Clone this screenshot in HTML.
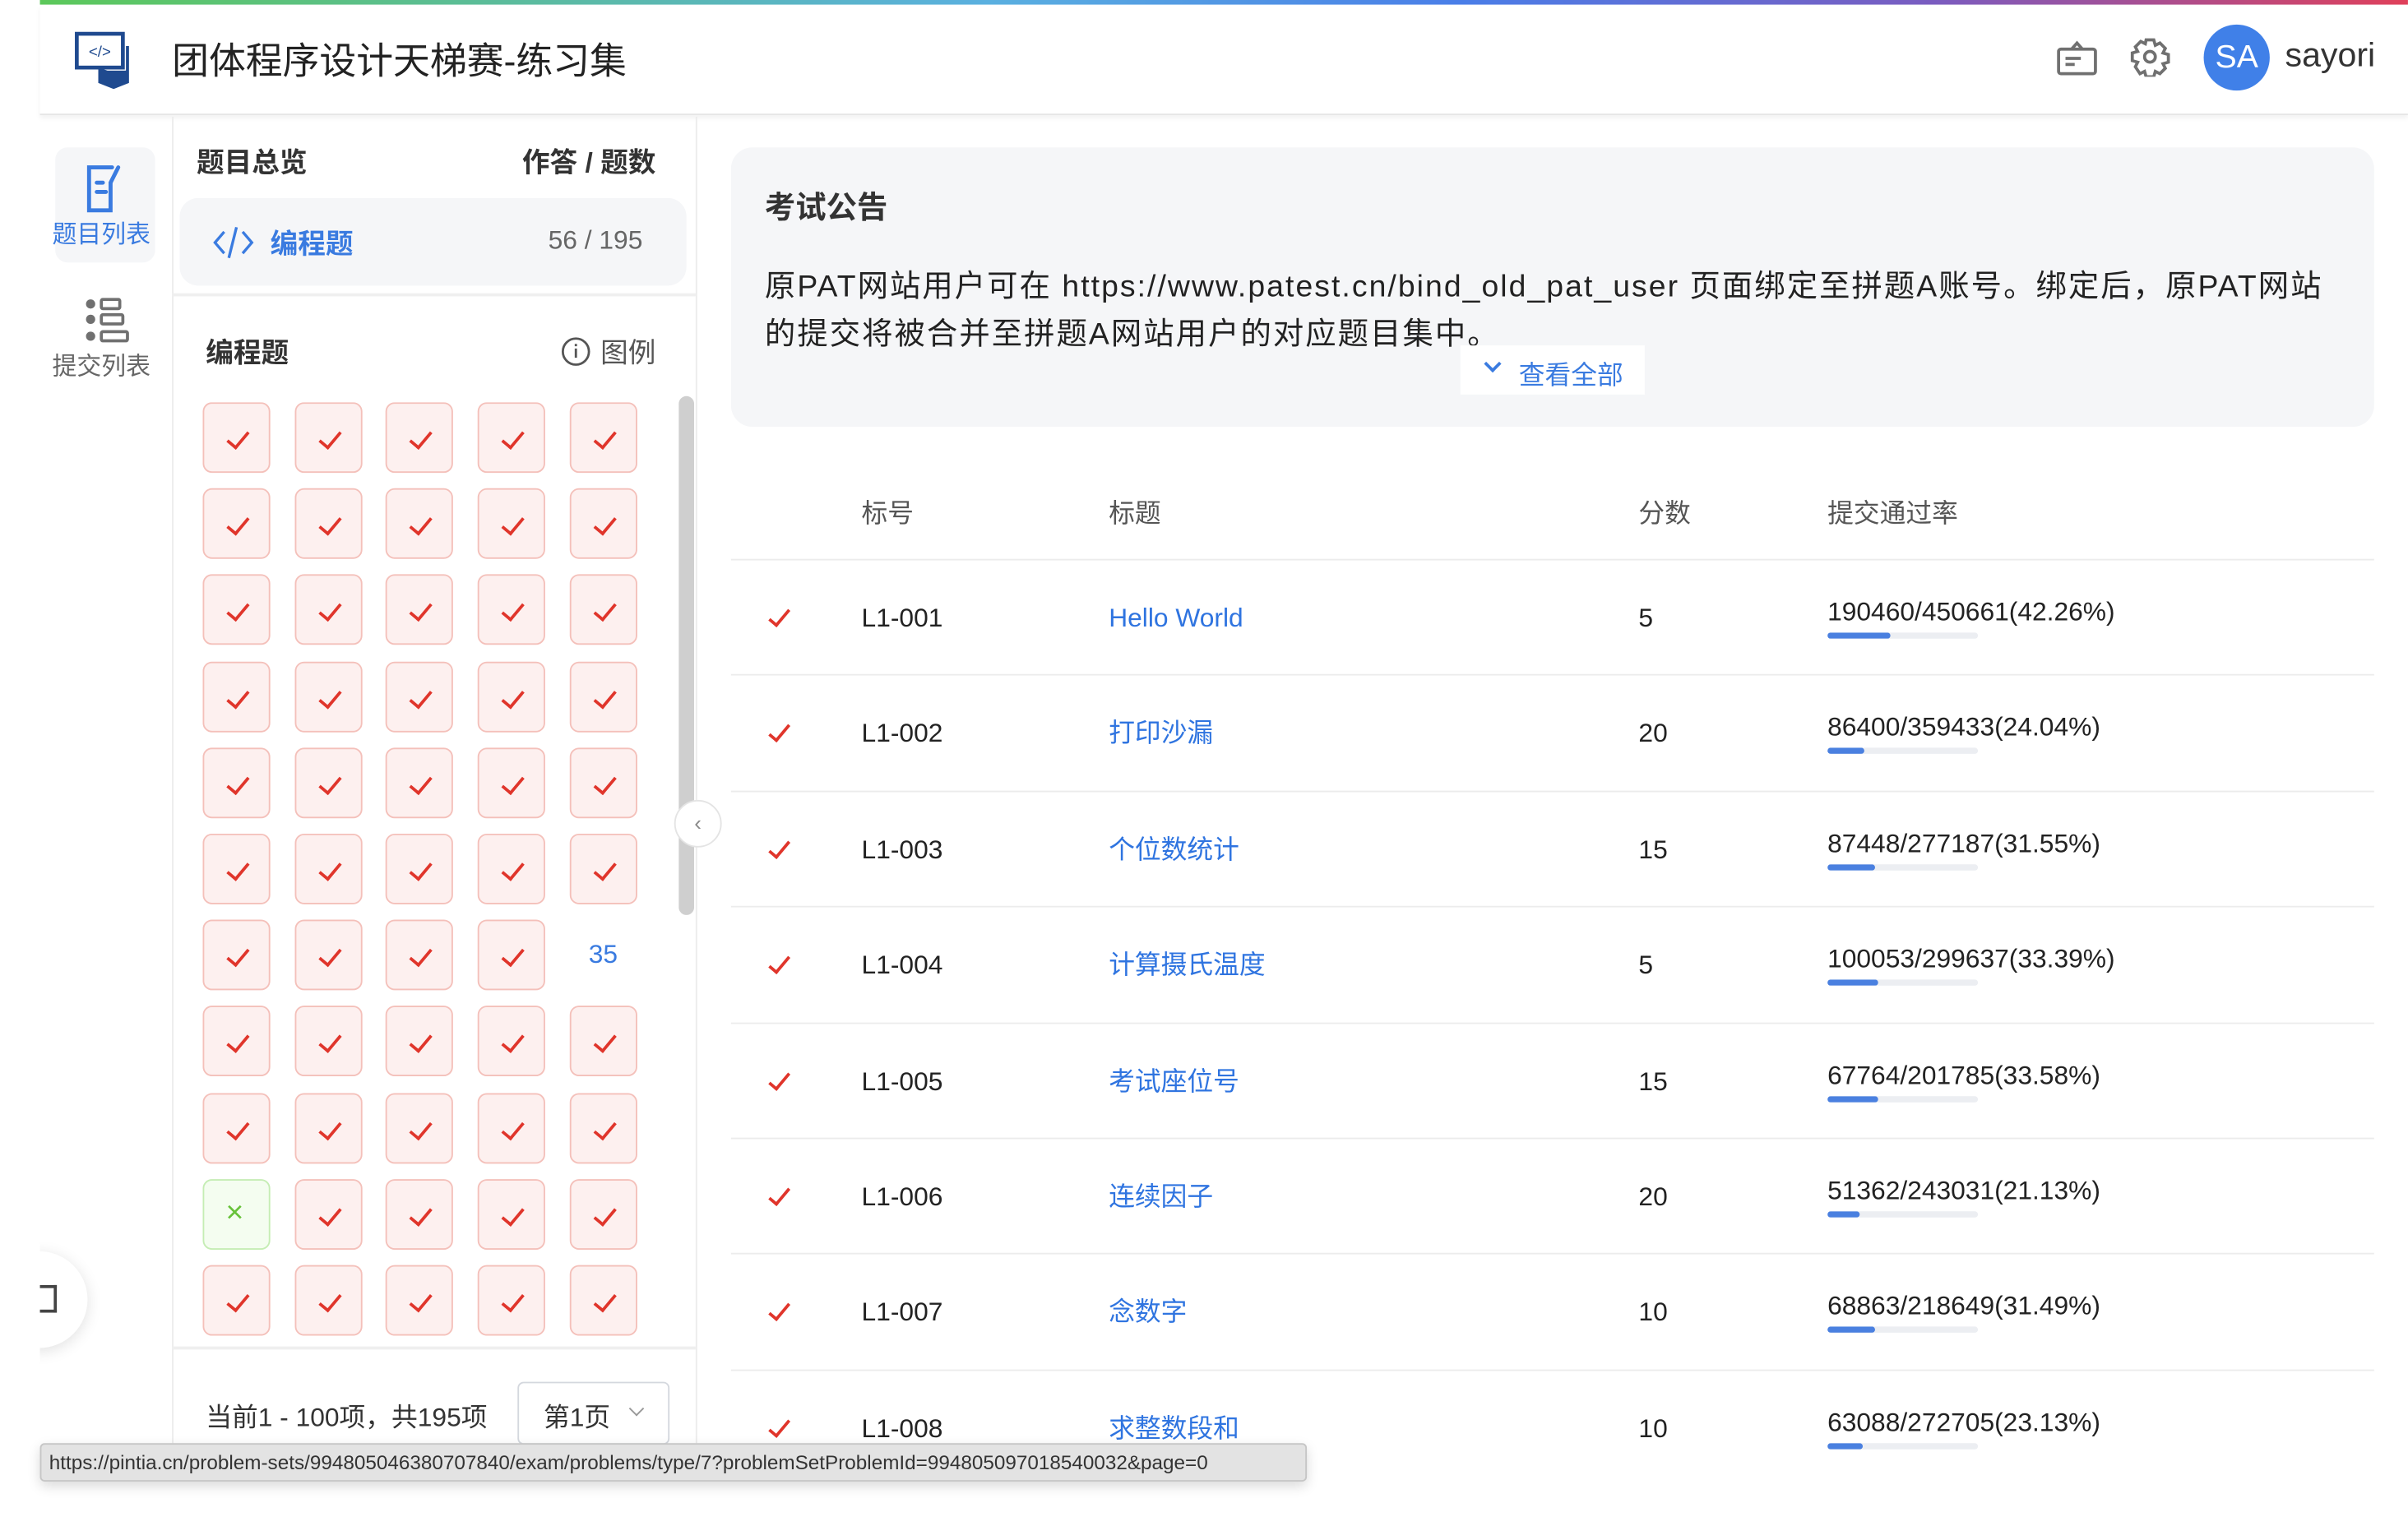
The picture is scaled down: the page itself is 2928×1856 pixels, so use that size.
<!DOCTYPE html>
<html><head><meta charset="utf-8">
<style>
*{box-sizing:border-box;margin:0;padding:0}
html,body{width:2928px;height:1856px;overflow:hidden;background:#fff}
body{font-family:"Liberation Sans","Noto Sans CJK SC",sans-serif;color:#222}
#w{position:absolute;left:0;top:0;width:1568px;height:994px;transform:scale(1.8673);transform-origin:0 0;background:#fff}
.a{position:absolute}
.topbar{left:26px;top:0;width:1542px;height:3px;background:linear-gradient(90deg,#5cc85a,#5ab0e0 40%,#4a7ee8 60%,#7a5cc0 80%,#e0405a)}
.hdr{left:26px;top:3px;width:1542px;height:72px;border-bottom:1px solid #e6e6e6;box-shadow:0 2px 3px rgba(0,0,0,.05)}
.vl{width:1px;background:#ececec}
.grid{left:132px;top:262px;width:290px;height:608px;overflow:hidden;display:flex;flex-wrap:wrap;column-gap:15.7px;row-gap:10.2px;align-content:flex-start}
.grid i{display:block;width:44px;height:46px;border:1px solid #f4c0ba;background:#fdf0ef;border-radius:6px;position:relative}
.grid i:after{content:"";position:absolute;left:18px;top:15px;width:6px;height:12px;border-right:2px solid #e0352b;border-bottom:2px solid #e0352b;transform:rotate(40deg)}
.grid i.g{border-color:#c5edb4;background:#f4fdf0}
.grid i.g:after{content:"×";border:0;transform:none;left:14px;top:10px;color:#67c23a;font-size:20px;font-style:normal;width:auto;height:auto}
.grid i.n{border:0;background:none;color:#3a7be0;font-style:normal;font-size:17px;text-align:center;line-height:46px}
.grid i.n:after{display:none}
.row{left:476px;width:1070px;height:75.4px;border-bottom:1px solid #ececec;font-size:17px}
.row span{position:absolute;top:0;line-height:75px}
.ck{position:absolute;left:28px;top:29px;width:7px;height:14px;border-right:2px solid #e0352b;border-bottom:2px solid #e0352b;transform:rotate(40deg)}
.bl{color:#2f74e0}
.row span.rt{left:714px;top:24px;line-height:20px;font-size:17px}
.pb{position:absolute;left:714px;top:47px;width:98px;height:4px;background:#eceef2;border-radius:2px;overflow:hidden}
.pb b{display:block;height:4px;background:#4a80e0;border-radius:2px}
</style></head><body><div id="w">
<div class="a topbar"></div>
<div class="a hdr"></div>
<svg class="a" style="left:48px;top:20px" width="42" height="38" viewBox="0 0 42 38">
<rect x="2" y="2" width="30" height="22" fill="#fff" stroke="#1f4a8f" stroke-width="2.5"/>
<text x="17" y="17" font-size="10" text-anchor="middle" fill="#1f4a8f" font-family="Liberation Sans">&lt;/&gt;</text>
<path d="M16 24 L16 34 L26 38 L36 34 L36 10 L34 10 L34 26 L22 26 Z" fill="#1f4a8f"/>
</svg>
<div class="a" style="left:112px;top:20px;font-size:24px;color:#222">团体程序设计天梯赛-练习集</div>
<svg class="a" style="left:1339px;top:26px" width="27" height="24" viewBox="0 0 27 24" fill="none" stroke="#707070" stroke-width="2"><rect x="1.5" y="6" width="24" height="16" rx="1.5"/><path d="M10 6 L13.5 2 L17 6"/><path d="M6 12h10M6 16h6"/></svg>
<svg class="a" style="left:1387px;top:24px" width="26" height="26" viewBox="0 0 26 26" fill="none" stroke="#707070" stroke-width="2"><path d="M10.5 2h5l1 3.5 3-1.5 3.5 3.5-1.5 3 3.5 1v5l-3.5 1 1.5 3-3.5 3.5-3-1.5-1 3.5h-5l-1-3.5-3 1.5L3.5 19.5l1.5-3L1.5 15.5v-5l3.5-1-1.5-3L7 3l3 1.5z"/><circle cx="13" cy="13" r="3.5"/></svg>
<div class="a" style="left:1435px;top:16px;width:43px;height:43px;border-radius:50%;background:#4080e8;color:#fff;font-size:21px;text-align:center;line-height:43px">SA</div>
<div class="a" style="left:1488px;top:23px;font-size:22px;color:#333">sayori</div>
<div class="a vl" style="left:112px;top:76px;height:864px"></div>
<div class="a" style="left:36px;top:96px;width:65px;height:75px;background:#f5f6f8;border-radius:8px"></div>
<svg class="a" style="left:55px;top:107px" width="26" height="32" viewBox="0 0 26 32" fill="none" stroke="#3a7be0" stroke-width="2.6" stroke-linecap="round"><path d="M18 2H3v28h14V12"/><path d="M8 12h4M8 18h6M22 2l-5 10"/></svg>
<div class="a" style="left:34px;top:139px;font-size:16px;color:#3a7be0">题目列表</div>
<svg class="a" style="left:55px;top:194px" width="30" height="30" viewBox="0 0 30 30" fill="#707070"><circle cx="4" cy="4" r="3"/><circle cx="4" cy="14" r="3"/><circle cx="4" cy="25" r="3"/><rect x="11" y="1" width="12" height="6" rx="1" fill="none" stroke="#707070" stroke-width="2"/><rect x="11" y="11" width="14" height="6" rx="1" fill="none" stroke="#707070" stroke-width="2"/><rect x="11" y="22" width="17" height="6" rx="1" fill="none" stroke="#707070" stroke-width="2"/></svg>
<div class="a" style="left:34px;top:225px;font-size:16px;color:#666">提交列表</div>
<div class="a vl" style="left:453px;top:76px;height:864px"></div>
<div class="a" style="left:128px;top:92px;font-size:18px;font-weight:bold;color:#333">题目总览</div>
<div class="a" style="left:340px;top:92px;font-size:18px;font-weight:bold;color:#333">作答 / 题数</div>
<div class="a" style="left:117px;top:129px;width:330px;height:57px;background:#f5f6f8;border-radius:12px"></div>
<svg class="a" style="left:138px;top:146px" width="28" height="24" viewBox="0 0 28 24" fill="none" stroke="#3a7be0" stroke-width="1.8"><path d="M8 5L2 12l6 7M20 5l6 7-6 7M16 2l-5 20"/></svg>
<div class="a" style="left:176px;top:145px;font-size:18px;font-weight:bold;color:#3a7be0">编程题</div>
<div class="a" style="left:357px;top:147px;font-size:17px;color:#666">56 / 195</div>
<div class="a" style="left:112px;top:191px;width:341px;height:2px;background:#efefef"></div>
<div class="a" style="left:134px;top:216px;font-size:18px;font-weight:bold;color:#333">编程题</div>
<svg class="a" style="left:365px;top:219px" width="20" height="20" viewBox="0 0 20 20" fill="none" stroke="#555" stroke-width="1.5"><circle cx="10" cy="10" r="8.5"/><path d="M10 8v6M10 5v1.5"/></svg>
<div class="a" style="left:391px;top:216px;font-size:18px;color:#555">图例</div>
<div class="a grid">
<i></i><i></i><i></i><i></i><i></i>
<i></i><i></i><i></i><i></i><i></i>
<i></i><i></i><i></i><i></i><i></i>
<i></i><i></i><i></i><i></i><i></i>
<i></i><i></i><i></i><i></i><i></i>
<i></i><i></i><i></i><i></i><i></i>
<i></i><i></i><i></i><i></i><i class="n">35</i>
<i></i><i></i><i></i><i></i><i></i>
<i></i><i></i><i></i><i></i><i></i>
<i class="g"></i><i></i><i></i><i></i><i></i>
<i></i><i></i><i></i><i></i><i></i>
</div>
<div class="a" style="left:442px;top:258px;width:10px;height:338px;background:#cfcfcf;border-radius:5px"></div>
<div class="a" style="left:439px;top:521px;width:31px;height:31px;border-radius:50%;background:#fff;border:1px solid #e4e4e4;color:#888;font-size:14px;text-align:center;line-height:28px">‹</div>
<div class="a" style="left:112px;top:877px;width:341px;height:2px;background:#efefef"></div>
<div class="a" style="left:134px;top:909px;font-size:17px;color:#333">当前1 - 100项，共195项</div>
<div class="a" style="left:337px;top:900px;width:99px;height:41px;border:1px solid #d4d8de;border-radius:4px"></div>
<div class="a" style="left:354px;top:909px;font-size:17px;color:#333">第1页</div>
<div class="a" style="left:411px;top:914px;width:7px;height:7px;border-right:1px solid #999;border-bottom:1px solid #999;transform:rotate(45deg)"></div>
<div class="a" style="left:-6px;top:815px;width:63px;height:63px;border-radius:50%;background:#fff;box-shadow:0 2px 10px rgba(0,0,0,.12)"></div>
<div class="a" style="left:0;top:790px;width:26px;height:120px;background:#fff"></div>
<div class="a" style="left:26px;top:837px;width:11px;height:18px;border:2px solid #444;border-left:0"></div>
<div class="a" style="left:476px;top:96px;width:1070px;height:182px;background:#f5f6f8;border-radius:14px"></div>
<div class="a" style="left:498px;top:119px;font-size:20px;font-weight:bold;color:#333">考试公告</div>
<div class="a" style="left:498px;top:172px;width:1026px;font-size:20px;line-height:31px;letter-spacing:1.1px;color:#222">原PAT网站用户可在 https://www.patest.cn/bind_old_pat_user 页面绑定至拼题A账号。绑定后，原PAT网站的提交将被合并至拼题A网站用户的对应题目集中。</div>
<div class="a" style="left:951px;top:225px;width:120px;height:32px;background:#fff"></div>
<div class="a" style="left:968px;top:233px;width:8px;height:8px;border-right:2px solid #3a7be0;border-bottom:2px solid #3a7be0;transform:rotate(45deg)"></div>
<div class="a" style="left:989px;top:230px;font-size:17px;color:#3a7be0">查看全部</div>
<div class="a" style="left:476px;top:300px;width:1070px;height:65px;border-bottom:1px solid #ececec;font-size:17px;color:#555">
<span class="a" style="left:85px;top:20px">标号</span><span class="a" style="left:246px;top:20px">标题</span><span class="a" style="left:591px;top:20px">分数</span><span class="a" style="left:714px;top:20px">提交通过率</span></div>
<div class="a row" style="top:365px"><div class="ck"></div><span style="left:85px">L1-001</span><span class="bl" style="left:246px">Hello World</span><span style="left:591px">5</span><span class="rt">190460/450661(42.26%)</span><div class="pb"><b style="width:41px"></b></div></div>
<div class="a row" style="top:440.4px"><div class="ck"></div><span style="left:85px">L1-002</span><span class="bl" style="left:246px">打印沙漏</span><span style="left:591px">20</span><span class="rt">86400/359433(24.04%)</span><div class="pb"><b style="width:24px"></b></div></div>
<div class="a row" style="top:515.8px"><div class="ck"></div><span style="left:85px">L1-003</span><span class="bl" style="left:246px">个位数统计</span><span style="left:591px">15</span><span class="rt">87448/277187(31.55%)</span><div class="pb"><b style="width:31px"></b></div></div>
<div class="a row" style="top:591.2px"><div class="ck"></div><span style="left:85px">L1-004</span><span class="bl" style="left:246px">计算摄氏温度</span><span style="left:591px">5</span><span class="rt">100053/299637(33.39%)</span><div class="pb"><b style="width:33px"></b></div></div>
<div class="a row" style="top:666.6px"><div class="ck"></div><span style="left:85px">L1-005</span><span class="bl" style="left:246px">考试座位号</span><span style="left:591px">15</span><span class="rt">67764/201785(33.58%)</span><div class="pb"><b style="width:33px"></b></div></div>
<div class="a row" style="top:742px"><div class="ck"></div><span style="left:85px">L1-006</span><span class="bl" style="left:246px">连续因子</span><span style="left:591px">20</span><span class="rt">51362/243031(21.13%)</span><div class="pb"><b style="width:21px"></b></div></div>
<div class="a row" style="top:817.4px"><div class="ck"></div><span style="left:85px">L1-007</span><span class="bl" style="left:246px">念数字</span><span style="left:591px">10</span><span class="rt">68863/218649(31.49%)</span><div class="pb"><b style="width:31px"></b></div></div>
<div class="a row" style="top:892.8px;border:0"><div class="ck"></div><span style="left:85px">L1-008</span><span class="bl" style="left:246px">求整数段和</span><span style="left:591px">10</span><span class="rt">63088/272705(23.13%)</span><div class="pb"><b style="width:23px"></b></div></div>
<div class="a" style="left:0;top:964px;width:1568px;height:30px;background:#fff"></div>
<div class="a" style="left:26px;top:940px;width:825px;height:25px;background:#e3e3e3;border:1px solid #c6c6c6;border-radius:3px;box-shadow:0 3px 8px rgba(0,0,0,.15);font-size:13px;color:#333;line-height:23px;padding-left:5px;white-space:nowrap;overflow:hidden">https://pintia.cn/problem-sets/994805046380707840/exam/problems/type/7?problemSetProblemId=994805097018540032&amp;page=0</div>
</div></body></html>
